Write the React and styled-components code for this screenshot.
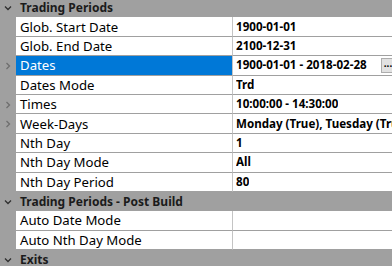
import React from 'react';
import styled, { createGlobalStyle } from 'styled-components';

const GlobalStyle = createGlobalStyle`
  html, body { margin: 0; padding: 0; background: #a0a0a0; }
  body { font-family: "Noto Sans", "Open Sans", sans-serif; overflow: hidden; }
`;

const Grid = styled.div`
  width: 392px;
  height: 266px;
  overflow: hidden;
  background: #a0a0a0;
`;

const List = styled.div`
  margin-top: -2px;
`;

const Row = styled.div`
  display: grid;
  grid-template-columns: 16px 217px 1fr;
  height: 19.4px;
  line-height: 16px;
  color: #000;
`;

const Gutter = styled.div`
  display: flex;
  align-items: center;
  justify-content: center;
  background: #a0a0a0;
`;

const CatTitle = styled.div`
  grid-column: 2 / 4;
  display: flex;
  align-items: center;
  padding-left: 4px;
  font-size: 12px;
  font-weight: 700;
  color: #1b1b1b;
  white-space: nowrap;
`;

const Name = styled.div`
  display: flex;
  align-items: center;
  padding-left: 4px;
  font-size: 13.2px;
  white-space: nowrap;
  overflow: hidden;
  background: ${p => (p.$selected ? '#0078d7' : '#fff')};
  color: ${p => (p.$selected ? '#fff' : '#000')};
  border-bottom: 1px solid #a0a0a0;
  border-right: 1px solid #c4c4c4;
`;

const Value = styled.div`
  display: flex;
  align-items: center;
  justify-content: space-between;
  padding-left: 3px;
  font-size: 11.6px;
  font-weight: 700;
  white-space: nowrap;
  overflow: hidden;
  background: #fff;
  border-bottom: 1px solid #a0a0a0;
`;

const ValueText = styled.span`
  overflow: hidden;
`;

const DotsButton = styled.div`
  flex: none;
  width: 14px;
  height: 15px;
  margin-left: 4px;
  margin-right: -3px;
  background: #e1e1e1;
  border: 1px solid #adadad;
  box-sizing: border-box;
  font-size: 10px;
  line-height: 9px;
  text-align: center;
  color: #000;
`;

const Chevron = ({ down }) => (
  <svg width="8" height="8" viewBox="0 0 8 8">
    {down ? (
      <polyline points="1,2.5 4,5.5 7,2.5" fill="none" stroke="#2f2f2f" strokeWidth="1.3" />
    ) : (
      <polyline points="2.5,1 5.5,4 2.5,7" fill="none" stroke="#6e6e6e" strokeWidth="1.3" />
    )}
  </svg>
);

const sections = [
  {
    title: 'Trading Periods',
    props: [
      { name: 'Glob. Start Date', value: '1900-01-01' },
      { name: 'Glob. End Date', value: '2100-12-31' },
      { name: 'Dates', value: '1900-01-01 - 2018-02-28', expand: true, selected: true },
      { name: 'Dates Mode', value: 'Trd' },
      { name: 'Times', value: '10:00:00 - 14:30:00', expand: true },
      { name: 'Week-Days', value: 'Monday (True), Tuesday (True), Wednesday (True)', expand: true },
      { name: 'Nth Day', value: '1' },
      { name: 'Nth Day Mode', value: 'All' },
      { name: 'Nth Day Period', value: '80' },
    ],
  },
  {
    title: 'Trading Periods - Post Build',
    props: [
      { name: 'Auto Date Mode', value: '' },
      { name: 'Auto Nth Day Mode', value: '' },
    ],
  },
  { title: 'Exits', props: [] },
];

export default function App() {
  return (
    <Grid>
      <GlobalStyle />
      <List>
        {sections.map(sec => (
          <React.Fragment key={sec.title}>
            <Row>
              <Gutter><Chevron down /></Gutter>
              <CatTitle>{sec.title}</CatTitle>
            </Row>
            {sec.props.map(p => (
              <Row key={p.name}>
                <Gutter>{p.expand ? <Chevron /> : null}</Gutter>
                <Name $selected={p.selected}>{p.name}</Name>
                <Value>
                  <ValueText>{p.value}</ValueText>
                  {p.selected ? <DotsButton>...</DotsButton> : null}
                </Value>
              </Row>
            ))}
          </React.Fragment>
        ))}
      </List>
    </Grid>
  );
}
